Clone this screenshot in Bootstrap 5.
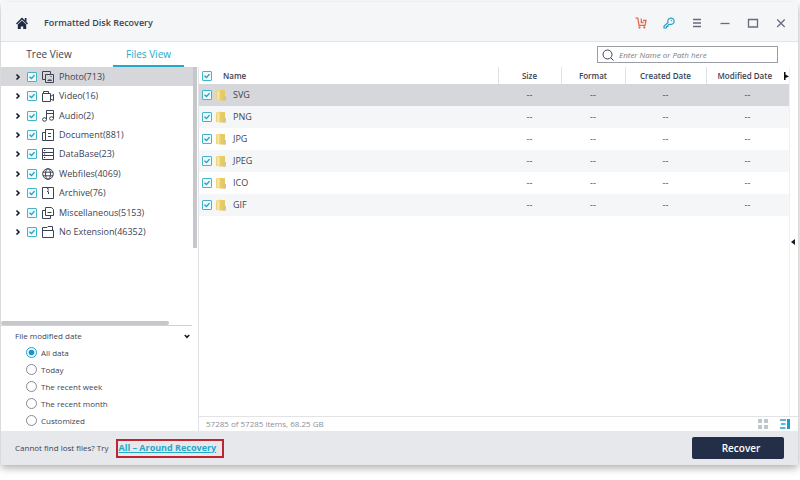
<!DOCTYPE html>
<html lang="en">
<head>
<meta charset="utf-8">
<meta name="viewport" content="width=device-width, initial-scale=1">
<title>Formatted Disk Recovery</title>
<link rel="stylesheet" href="https://cdn.jsdelivr.net/npm/bootstrap@5.3.0/dist/css/bootstrap.min.css">
<style>
  :root { --teal: #25a9c9; --ink: #3c4354; --line: #e2e3e7; }
  body { font-family: "Open Sans", "Noto Sans", sans-serif; font-size: 9px; line-height: 12px; color: var(--ink); background: #fff; }
  .page { padding: 2px 2px 15px 1px; }
  .window { background: #fff; box-shadow: 0 3px 8px rgba(0,0,0,.32); }
  button { background: none; border: 0; padding: 0; color: inherit; line-height: 1; }
  svg { display: block; }
  .line-art { fill: none; stroke: currentColor; }
  .tint-orange { color: #df6b50; }
  .tint-teal { color: #25a0c4; }
  .titlebar { height: 40px; background: #f5f6f8; border-bottom: 1px solid var(--line); padding: 3px 11px 0 14px; }
  .titlebar h1 { font-size: 9px; line-height: 12px; font-weight: 600; margin-left: 15px; }
  .tools { gap: 16px; color: #666c7b; }
  .toolbar { height: 25px; padding-left: 2px; padding-right: 20px; }
  .view-tabs .nav-link { width: 92px; height: 25px; padding: 0; text-align: center; font-size: 10px; line-height: 24px; color: var(--ink); border: 0; border-bottom: 2px solid transparent; border-radius: 0; }
  .view-tabs .nav-link.active { width: 71px; color: var(--teal); border-color: var(--teal); }
  .view-tabs { gap: 18px; }
  .search { width: 181px; height: 17px; border: 1px solid #9a9da5; padding: 0 4px; gap: 5px; }
  .search input { border: 0; outline: 0; padding: 0; font-size: 8px; line-height: 12px; font-style: italic; background: none; min-width: 0; }
  .search input::placeholder { color: #777c86; }
  .sidebar { width: 198px; border-right: 1px solid var(--line); }
  .tree { height: 175px; }
  .tree li { padding-left: 14px; }
  .tree .current { background: #d6d7db; }
  .tree svg { margin-right: 5px; }
  .tree .twist { width: 6px; margin-right: 6px; }
  .tree .twist svg { margin: 0; stroke: #161b28; stroke-width: 1.6; }
  .form-check-input { width: 10px; height: 10px; margin: 0; border: 1px solid #43b4cd; flex: none; display: block; background-color: #fff; }
  .form-check-input[type=checkbox] { border-radius: 1px; }
  .form-check-input:checked { background-color: #effafc; border-color: #43b4cd; }
  .form-check-input:checked[type=checkbox] { background-size: 8px; background-image: url("data:image/svg+xml,%3Csvg xmlns='http://www.w3.org/2000/svg' viewBox='0 0 8 8'%3E%3Cpath d='M1.5 3.8l2 1.800 3-3.500' fill='none' stroke='%2325a0bd' stroke-width='1.400'/%3E%3C/svg%3E"); }
  .form-check-input[type=radio] { width: 11px; height: 11px; border-color: #858a94; }
  .form-check-input:checked[type=radio] { border-color: #25a0c9; background-size: 9px; background-image: url("data:image/svg+xml,%3Csvg xmlns='http://www.w3.org/2000/svg' viewBox='0 0 9 9'%3E%3Ccircle cx='4.5' cy='4.5' r='2.8' fill='%231b96c4'/%3E%3C/svg%3E"); }
  .tree .form-check-input { margin-right: 5px; }
  .vbar { width: 4px; height: 181px; margin-right: 1px; background: #c6c7ca; }
  .hbar { height: 4px; width: 88%; background: #c6c7ca; border-radius: 2px; }
  .hline { border-bottom: 1px solid #d0d2d6; margin-right: 6px; }
  .filter { padding: 4px 8px 2px 14px; font-size: 8px; }
  .filter .choices { padding: 2px 0 0 11px; }
  .filter label { height: 17px; gap: 4px; }
  .files { table-layout: fixed; margin: 0; color: var(--ink); }
  .files th { height: 17px; padding: 0; font-size: 8px; line-height: 12px; font-weight: 600; text-align: center; border-left: 1px solid var(--line); }
  .files th:first-child { border-left: 0; text-align: left; }
  .files td { height: 22px; padding: 0; text-align: center; line-height: 12px; }
  .files th:first-child, .files td:first-child { padding-left: 3px; }
  .files tbody tr:nth-child(even) { background: #f5f6f8; }
  .files tbody tr.picked { background: #d6d7db; }
  .files .form-check-input { margin-right: 4px; }
  .files .folder { margin-right: 7px; }
  .files .name-head { margin-left: 7px; }
  .edge { width: 9px; border-left: 1px solid #eff0f2; }
  .status { height: 15px; border-top: 1px solid var(--line); padding: 0 8px 0 7px; font-size: 8px; color: #8b9099; }
  .footer-bar { height: 34px; background: #e6e8eb; padding: 0 14px; }
  .ask { font-size: 8px; margin-right: 8px; }
  .around { border: 2px solid #bd2532; height: 19px; padding-right: 6px; line-height: 14px; }
  .around a { font-weight: 700; color: var(--teal); }
  .recover { width: 92px; height: 22px; padding: 0 0 0 6px; font-size: 10px; font-weight: 600; color: #fff; background: #232f49; border: 0; border-radius: 2px; }
</style>
<script src="https://cdn.jsdelivr.net/npm/bootstrap@5.3.0/dist/js/bootstrap.bundle.min.js"></script>
</head>
<body>
<svg class="d-none">
  <symbol id="twist" viewBox="0 0 6 8"><path d="M1.500 1.500L4 4 1.500 6.500"/></symbol>
  <symbol id="folder" viewBox="0 0 10 12"><path d="M0 1.500L5 .5V11.500L0 11Z" fill="#f0d778"/><path d="M4.500 1H9V11.500H4.500Z" fill="#e6ca66"/><path d="M7.500 7H10V11.500H7Z" fill="#d9c48a"/><path d="M1.500 2V10.500H3V2Z" fill="#f9eaa5"/></symbol>
</svg>
<div class="page vh-100">
<main class="window h-100 d-flex flex-column">
  <header class="titlebar d-flex align-items-center">
    <button aria-label="Home"><svg width="14" height="12" viewBox="0 0 14 12" fill="#1e2b45"><path d="M1.500 7L7 1.500 12.500 7" fill="none" stroke="#1e2b45" stroke-width="1.500"/><path d="M2.800 7.500L7 3.500l4.200 4V12H8.200V9.500H5.800V12H2.800Z"/><path d="M9.800 1h1.700v4L9.800 3.200Z"/></svg></button>
    <h1 class="mb-0">Formatted Disk Recovery</h1>
    <div class="tools d-flex align-items-center ms-auto">
      <button class="tint-orange" aria-label="Shop"><svg class="line-art" width="12" height="12" viewBox="0 0 12 12" stroke-width="1.300"><path d="M.5 1.200H2.800L4 8.300H10L11 3.500H9M6.300 1.500V5.500H8.500M8 3.500H11"/><circle cx="4.500" cy="10.500" r=".5"/><circle cx="9.300" cy="10.500" r=".5"/></svg></button>
      <button class="tint-teal" aria-label="Register"><svg class="line-art" width="12" height="12" viewBox="0 0 12 12" stroke-width="1.200"><path d="M5 5.500A3.200 3.200 0 1 1 7 7.300L5.800 7.500 4.800 8.500V9.500H3.500V11H1V9.200Z"/><path d="M8 4L8.800 3.200"/></svg></button>
      <button aria-label="Menu"><svg class="line-art" width="12" height="12" viewBox="0 0 12 12" stroke-width="1.300"><path d="M2 2.500h8M2 6h8M2 9.500h8"/></svg></button>
      <button aria-label="Minimize"><svg class="line-art" width="12" height="12" viewBox="0 0 12 12" stroke-width="1.300"><path d="M1.500 6.500h9"/></svg></button>
      <button aria-label="Maximize"><svg class="line-art" width="12" height="12" viewBox="0 0 12 12" stroke-width="1.300"><path d="M1.500 2.500h9v7.500h-9Z"/></svg></button>
      <button aria-label="Close"><svg class="line-art" width="12" height="12" viewBox="0 0 12 12" stroke-width="1.300"><path d="M2.200 2.500l7.500 7.500M9.700 2.500L2.200 10"/></svg></button>
    </div>
  </header>
  <div class="toolbar d-flex align-items-center justify-content-between">
    <nav class="nav view-tabs">
      <button class="nav-link">Tree View</button>
      <button class="nav-link active">Files View</button>
    </nav>
    <label class="search d-flex align-items-center">
      <svg class="line-art" width="12" height="12" viewBox="0 0 12 12"><circle cx="5.500" cy="5.500" r="4.500"/><path d="M8.800 8.800L11.500 11.500"/></svg>
      <input class="flex-grow-1" type="text" placeholder="Enter Name or Path here" aria-label="Search">
    </label>
  </div>
  <div class="d-flex flex-grow-1 overflow-hidden">
    <aside class="sidebar d-flex flex-column flex-shrink-0">
      <div class="d-flex flex-grow-1">
        <ul class="tree list-unstyled mb-0 flex-grow-1 d-flex flex-column">
          <li class="current d-flex align-items-center flex-fill"><button class="twist" aria-label="Expand"><svg class="line-art" width="6" height="8"><use href="#twist"/></svg></button><input class="form-check-input" type="checkbox" id="c1" checked><svg class="line-art" width="12" height="12" viewBox="0 0 12 12"><path d="M3.500 8.500H.5V.5H8.500V3.500M3.500 3.500h8v8h-8Z"/><path d="M5 10l2-2 1 1 1-1L10 10Z" fill="currentColor" stroke="none"/><path d="M8.500 5.500h1"/></svg><label for="c1">Photo(713)</label></li>
          <li class="d-flex align-items-center flex-fill"><button class="twist" aria-label="Expand"><svg class="line-art" width="6" height="8"><use href="#twist"/></svg></button><input class="form-check-input" type="checkbox" id="c2" checked><svg class="line-art" width="12" height="12" viewBox="0 0 12 12"><path d="M.5 3.500h8v8h-8ZM1.500 3.500V1.500H6.500V3.500M8.500 6.500L11.500 4.500V10.500L8.500 9"/></svg><label for="c2">Video(16)</label></li>
          <li class="d-flex align-items-center flex-fill"><button class="twist" aria-label="Expand"><svg class="line-art" width="6" height="8"><use href="#twist"/></svg></button><input class="form-check-input" type="checkbox" id="c3" checked><svg class="line-art" width="12" height="12" viewBox="0 0 12 12"><path d="M4.500 9.500V.5H11.500V8.500M4.500 3.500H11.500"/><ellipse cx="2.500" cy="9.500" rx="2" ry="1.700"/><ellipse cx="9.500" cy="8.500" rx="2" ry="1.700"/></svg><label for="c3">Audio(2)</label></li>
          <li class="d-flex align-items-center flex-fill"><button class="twist" aria-label="Expand"><svg class="line-art" width="6" height="8"><use href="#twist"/></svg></button><input class="form-check-input" type="checkbox" id="c4" checked><svg class="line-art" width="12" height="12" viewBox="0 0 12 12"><path d="M3.500 .5h8v11h-8ZM3.500 3.500H.5V11.500H3.500M6 4.500H9M6 7.500H9"/></svg><label for="c4">Document(881)</label></li>
          <li class="d-flex align-items-center flex-fill"><button class="twist" aria-label="Expand"><svg class="line-art" width="6" height="8"><use href="#twist"/></svg></button><input class="form-check-input" type="checkbox" id="c5" checked><svg class="line-art" width="12" height="12" viewBox="0 0 12 12"><path d="M.5 .5h11v11H.5ZM.5 4.500h11M.5 7.500h11M2 2.500h1.200M2 6h1.200M2 9.500h1.200"/></svg><label for="c5">DataBase(23)</label></li>
          <li class="d-flex align-items-center flex-fill"><button class="twist" aria-label="Expand"><svg class="line-art" width="6" height="8"><use href="#twist"/></svg></button><input class="form-check-input" type="checkbox" id="c6" checked><svg class="line-art" width="12" height="12" viewBox="0 0 12 12"><circle cx="6" cy="6" r="5.300"/><ellipse cx="6" cy="6" rx="2.500" ry="5.300"/><path d="M1 4.200h10M1 7.800h10"/></svg><label for="c6">Webfiles(4069)</label></li>
          <li class="d-flex align-items-center flex-fill"><button class="twist" aria-label="Expand"><svg class="line-art" width="6" height="8"><use href="#twist"/></svg></button><input class="form-check-input" type="checkbox" id="c7" checked><svg class="line-art" width="12" height="12" viewBox="0 0 12 12"><path d="M.5 .5h11v11H.5ZM5 1.500H6.500M5.500 3H7M5 4.500H6.500M6.500 5V7"/></svg><label for="c7">Archive(76)</label></li>
          <li class="d-flex align-items-center flex-fill"><button class="twist" aria-label="Expand"><svg class="line-art" width="6" height="8"><use href="#twist"/></svg></button><input class="form-check-input" type="checkbox" id="c8" checked><svg class="line-art" width="12" height="12" viewBox="0 0 12 12"><path d="M3.500 .5H9.500L11.500 2.500V8.500H3.500ZM3.500 3.500H.5V11.500H8.500V8.500M5.500 5.500h4"/></svg><label for="c8">Miscellaneous(5153)</label></li>
          <li class="d-flex align-items-center flex-fill"><button class="twist" aria-label="Expand"><svg class="line-art" width="6" height="8"><use href="#twist"/></svg></button><input class="form-check-input" type="checkbox" id="c9" checked><svg class="line-art" width="12" height="12" viewBox="0 0 12 12"><path d="M.5 11.500V1.500H5L6 .5H10.500V4.500M.5 4.500H11.500V11.500H.5"/></svg><label for="c9">No Extension(46352)</label></li>
        </ul>
        <div class="vbar"></div>
      </div>
      <div class="hline"><div class="hbar"></div></div>
      <section class="filter">
        <div class="d-flex justify-content-between align-items-center"><span>File modified date</span><button aria-label="Collapse"><svg width="6" height="5" viewBox="0 0 6 5" fill="none" stroke="#161b28" stroke-width="1.600"><path d="M.8 1L3 3.300 5.200 1"/></svg></button></div>
        <div class="choices">
          <label class="d-flex align-items-center"><input class="form-check-input" type="radio" name="when" checked>All data</label>
          <label class="d-flex align-items-center"><input class="form-check-input" type="radio" name="when">Today</label>
          <label class="d-flex align-items-center"><input class="form-check-input" type="radio" name="when">The recent week</label>
          <label class="d-flex align-items-center"><input class="form-check-input" type="radio" name="when">The recent month</label>
          <label class="d-flex align-items-center"><input class="form-check-input" type="radio" name="when">Customized</label>
        </div>
      </section>
    </aside>
    <section class="flex-grow-1 d-flex flex-column">
      <div class="d-flex flex-grow-1">
        <div class="flex-grow-1">
          <table class="files w-100">
            <colgroup><col><col style="width:63px"><col style="width:64px"><col style="width:81px"><col style="width:83px"></colgroup>
            <thead><tr>
              <th><div class="d-flex align-items-center"><input class="form-check-input" type="checkbox" aria-label="Select all" checked><span class="name-head">Name</span></div></th>
              <th>Size</th><th>Format</th><th>Created Date</th>
              <th><div class="d-flex align-items-center justify-content-end"><span class="me-2 pe-1">Modified Date</span><svg width="5" height="8" viewBox="0 0 5 8"><path d="M0 0H1.500V2.500L5 4.500 1.500 6V8H0Z" fill="#111"/></svg></div></th>
            </tr></thead>
            <tbody>
              <tr class="picked"><td><div class="d-flex align-items-center"><input class="form-check-input" type="checkbox" id="f1" checked><svg class="folder" width="10" height="12"><use href="#folder"/></svg><label for="f1">SVG</label></div></td><td>--</td><td>--</td><td>--</td><td>--</td></tr>
              <tr><td><div class="d-flex align-items-center"><input class="form-check-input" type="checkbox" id="f2" checked><svg class="folder" width="10" height="12"><use href="#folder"/></svg><label for="f2">PNG</label></div></td><td>--</td><td>--</td><td>--</td><td>--</td></tr>
              <tr><td><div class="d-flex align-items-center"><input class="form-check-input" type="checkbox" id="f3" checked><svg class="folder" width="10" height="12"><use href="#folder"/></svg><label for="f3">JPG</label></div></td><td>--</td><td>--</td><td>--</td><td>--</td></tr>
              <tr><td><div class="d-flex align-items-center"><input class="form-check-input" type="checkbox" id="f4" checked><svg class="folder" width="10" height="12"><use href="#folder"/></svg><label for="f4">JPEG</label></div></td><td>--</td><td>--</td><td>--</td><td>--</td></tr>
              <tr><td><div class="d-flex align-items-center"><input class="form-check-input" type="checkbox" id="f5" checked><svg class="folder" width="10" height="12"><use href="#folder"/></svg><label for="f5">ICO</label></div></td><td>--</td><td>--</td><td>--</td><td>--</td></tr>
              <tr><td><div class="d-flex align-items-center"><input class="form-check-input" type="checkbox" id="f6" checked><svg class="folder" width="10" height="12"><use href="#folder"/></svg><label for="f6">GIF</label></div></td><td>--</td><td>--</td><td>--</td><td>--</td></tr>
            </tbody>
          </table>
        </div>
        <div class="edge flex-shrink-0 d-flex align-items-center"><button aria-label="Show preview"><svg width="5" height="6" viewBox="0 0 5 6"><path d="M5 0V6L1 3Z" fill="#161b28"/></svg></button></div>
      </div>
      <div class="status d-flex align-items-center">
        <span class="me-auto">57285 of 57285 items, 68.25 GB</span>
        <button class="me-2 pe-1" aria-label="Grid view"><svg width="10" height="10" viewBox="0 0 10 10"><path d="M0 0h4v4H0ZM6 0h4v4H6ZM0 6h4v4H0ZM6 6h4v4H6Z" fill="#bcc8cb"/></svg></button>
        <button aria-label="Detail view"><svg width="10" height="10" viewBox="0 0 10 10"><path d="M0 1H6M1 5H5.500M0 9H5.500" stroke="#25a0c9" stroke-width="1.400"/><path d="M7 0h3v10H7Z" fill="#1b9ccc"/></svg></button>
      </div>
    </section>
  </div>
  <footer class="footer-bar d-flex align-items-center">
    <span class="ask">Cannot find lost files? Try</span>
    <span class="around"><a href="#">All – Around Recovery</a></span>
    <button class="recover btn ms-auto">Recover</button>
  </footer>
</main>
</div>
</body>
</html>
